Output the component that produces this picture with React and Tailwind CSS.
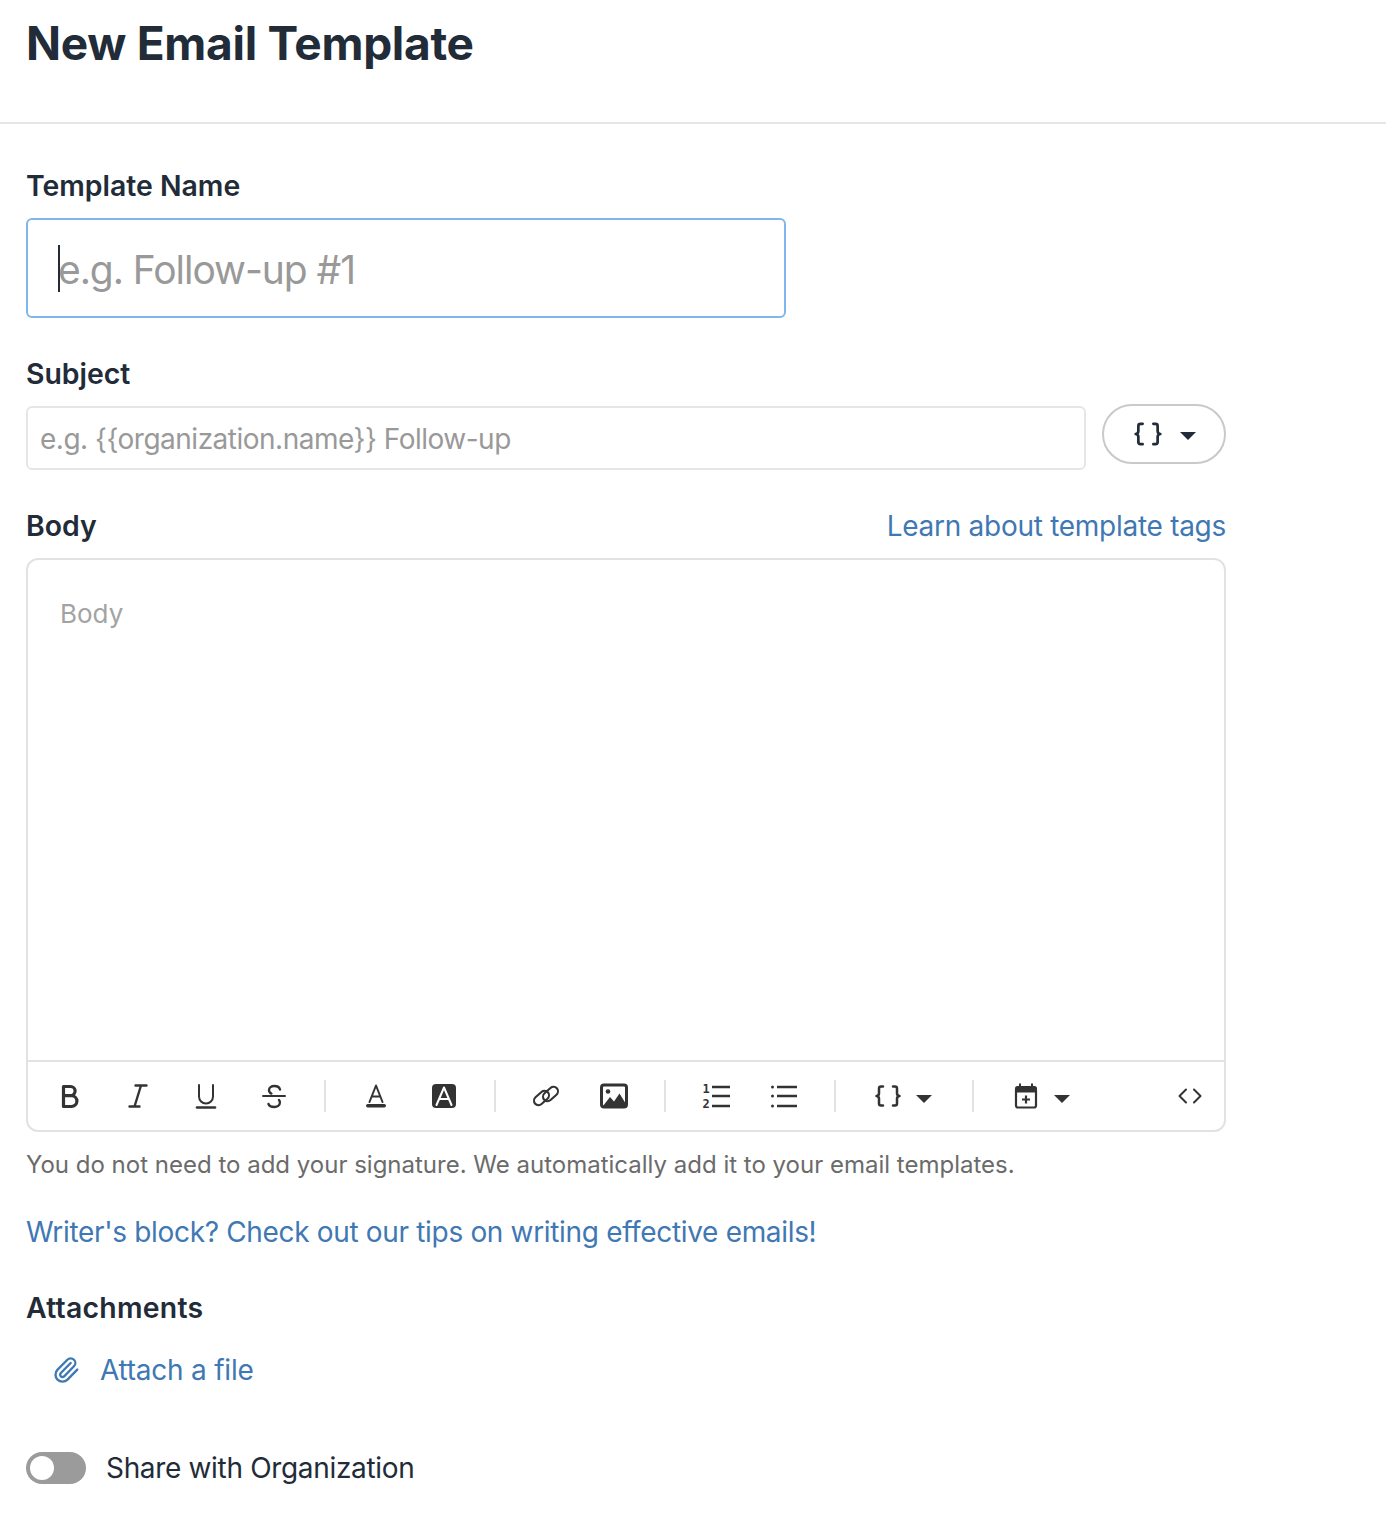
import { Paperclip } from 'lucide-react'

const INK = '#333333'

function Icon({ children, size = 28, className = '' }) {
  return (
    <svg width={size} height={size} viewBox="0 0 28 28" fill="none" stroke={INK} strokeWidth="2" strokeLinecap="round" strokeLinejoin="round" className={className}>
      {children}
    </svg>
  )
}

const BoldIcon = () => (
  <Icon>
    <path strokeWidth="3.200" d="M7.500 4.500h7a4.600 4.600 0 0 1 0 9.200h-7zM7.500 13.700h8a5.400 5.400 0 0 1 0 10.800h-8z" />
  </Icon>
)

const ItalicIcon = () => (
  <Icon>
    <path strokeWidth="2.400" d="M11.500 3.500h11M5.500 24.500h10M17 3.500l-6.500 21" />
  </Icon>
)

const UnderlineIcon = () => (
  <Icon>
    <path strokeWidth="2" d="M7 3v11.500a7 7 0 0 0 14 0V3" />
    <path strokeWidth="2.600" d="M5 25.500h18" />
  </Icon>
)

const StrikeIcon = () => (
  <Icon>
    <path strokeWidth="2" d="M3 14h22" />
    <path strokeWidth="2.400" d="M20 7.500c-.6-2.400-2.800-3.500-5.600-3.500-3.200 0-5.400 1.600-5.400 4 0 1.800 1 3 2.400 3.600M19 18c.6.8.9 1.700.9 2.600 0 2.800-2.500 4.400-5.700 4.400-2.800 0-5-1-5.700-3" />
  </Icon>
)

const TextColorIcon = () => (
  <Icon>
    <path strokeWidth="2" d="M7.500 20L14 3.500 20.500 20M10 14.500h8" />
    <rect x="4" y="22" width="20" height="3.500" rx="1.700" fill={INK} stroke="none" />
  </Icon>
)

const HighlightIcon = () => (
  <Icon>
    <rect x="2" y="2" width="24" height="24" rx="4" fill={INK} stroke="none" />
    <path stroke="#ffffff" strokeWidth="2" d="M6.500 23L14 5.500 21.500 23M9.500 17h9" />
  </Icon>
)

const LinkIcon = () => (
  <Icon>
    <g strokeWidth="2.100">
      <rect x="1" y="11.500" width="17" height="9" rx="4.500" transform="rotate(-42 9.500 16)" />
      <rect x="10" y="7.500" width="17" height="9" rx="4.500" transform="rotate(-42 18.500 12)" />
    </g>
  </Icon>
)

const ImageIcon = () => (
  <Icon>
    <rect x="1.500" y="3" width="25" height="22" rx="2.500" strokeWidth="3" fill="#ffffff" />
    <circle cx="8" cy="9.500" r="2.300" fill={INK} stroke="none" />
    <path fill={INK} stroke="none" d="M3 24l7-9 4 4.500 5.500-8L26 22v2.500H3z" />
  </Icon>
)

const OrderedIcon = () => (
  <Icon>
    <text x="0.500" y="11" fontFamily="'DejaVu Sans Mono', monospace" fontWeight="700" fontSize="12" fill={INK} stroke="none">1</text>
    <text x="0.500" y="26" fontFamily="'DejaVu Sans Mono', monospace" fontWeight="700" fontSize="12" fill={INK} stroke="none">2</text>
    <path strokeWidth="2.400" strokeLinecap="butt" d="M10 5h18M10 14h18M10 24h18" />
  </Icon>
)

const BulletIcon = () => (
  <Icon>
    <path strokeWidth="2.400" strokeLinecap="butt" d="M7 5h20M7 14h20M7 24h20" />
    <circle cx="2.500" cy="5" r="1.500" fill={INK} stroke="none" />
    <circle cx="2.500" cy="14" r="1.500" fill={INK} stroke="none" />
    <circle cx="2.500" cy="24" r="1.500" fill={INK} stroke="none" />
  </Icon>
)

const BracesIcon = ({ size = 28, color = INK }) => (
  <svg width={size} height={size} viewBox="0 0 28 28" fill="none" stroke={color} strokeWidth="2.500" strokeLinecap="round" strokeLinejoin="round">
    <path d="M9 4.500H7c-1.500 0-2 .8-2 2v5c0 1.300-.8 2.200-2.500 2.500 1.700.3 2.500 1.200 2.500 2.500v5c0 1.200.5 2 2 2h2" />
    <path d="M19 4.500h2c1.500 0 2 .8 2 2v5c0 1.300.8 2.200 2.500 2.500-1.700.3-2.500 1.200-2.500 2.500v5c0 1.200-.5 2-2 2h-2" />
  </svg>
)

const CalendarIcon = () => (
  <Icon>
    <path fill={INK} stroke="none" d="M7 1.500h2V4h10V1.500h2V4h1.500A2.500 2.500 0 0 1 25 6.500v4H3v-4A2.500 2.500 0 0 1 5.500 4H7z" />
    <rect x="4" y="6" width="20" height="19.500" rx="2" strokeWidth="2.200" />
    <path strokeWidth="2.200" strokeLinecap="butt" d="M14 13.500v8M10 17.500h8" />
  </Icon>
)

const CodeIcon = () => (
  <Icon>
    <path strokeWidth="2" d="M10 7.500L3.500 14l6.500 6.500M18 7.500l6.500 6.500-6.500 6.500" />
  </Icon>
)

function Caret({ color = INK }) {
  return (
    <svg width="16" height="10" viewBox="0 0 16 10" style={{ fill: color }}>
      <path d="M0 1h16L8 9z" />
    </svg>
  )
}

function ToolButton({ children }) {
  return <button className="flex h-full w-[68px] items-center justify-center">{children}</button>
}

function DropButton({ children }) {
  return (
    <button className="relative flex h-full w-[104px] items-center">
      <span className="ml-[22px] flex">{children}</span>
      <span className="absolute left-[64px] top-[32px] flex">
        <Caret />
      </span>
    </button>
  )
}

const Divider = () => <span className="mx-4 h-[32px] w-[2px] shrink-0 bg-[#e2e2e2]" />

function FieldLabel({ children, className = '' }) {
  return <label className={`block text-[28.4px] leading-[36px] font-semibold text-[#222b38] ${className}`}>{children}</label>
}

export default function App() {
  return (
    <div className="min-h-[1516px] bg-white font-['Inter',sans-serif] text-[#222b38]">
      <header className="h-[124px] border-b-2 border-[#e6e6e6] pl-[26px] pt-[14px]">
        <h1 className="text-[46px] leading-[58px] font-bold tracking-[-0.28px]">New Email Template</h1>
      </header>

      <main className="w-[1226px] pl-[26px] pt-[44px]">
        <FieldLabel>Template Name</FieldLabel>
        <div className="relative mt-[14px] w-[760px]">
          <input
            placeholder="e.g. Follow-up #1"
            className="block h-[100px] w-full rounded-md border-2 border-[#80b6ee] bg-white px-[30px] pt-[2px] text-[39px] tracking-[-1.05px] outline-none placeholder:text-[#999999]"
          />
          <span className="absolute left-[32px] top-[27px] h-[47px] w-[2px] bg-[#222b38]" />
        </div>

        <div className="mt-[38px]">
          <FieldLabel>Subject</FieldLabel>
        </div>
        <div className="mt-[12px] flex items-start gap-4">
          <input
            placeholder="e.g. {{organization.name}} Follow-up"
            className="mt-[2px] block h-[64px] w-[1060px] rounded-md border-2 border-[#e6e6e6] bg-white px-3 pt-[2px] text-[28px] tracking-[-0.5px] outline-none placeholder:text-[#999999]"
          />
          <button className="relative flex h-[60px] w-[124px] items-center rounded-full border-2 border-[#c9c9c9] bg-white">
            <span className="ml-[29px] flex">
              <BracesIcon size={30} color="#222b38" />
            </span>
            <span className="ml-[17px] mt-[4px] flex">
              <Caret color="#222b38" />
            </span>
          </button>
        </div>

        <div className="mt-[38px] flex items-center justify-between">
          <FieldLabel>Body</FieldLabel>
          <a className="text-[28px] leading-[36px] tracking-[-0.28px] text-[#3f78b3]">Learn about template tags</a>
        </div>

        <div className="mt-[14px] h-[574px] w-[1200px] overflow-hidden rounded-xl border-2 border-[#e2e2e2]">
          <div className="h-[500px] px-[32px] pt-[36px] text-[26px] leading-[36px] text-[#a3a3a3]">Body</div>
          <div className="flex h-[70px] items-center border-t-2 border-[#e2e2e2] pl-[8px]">
            <ToolButton><BoldIcon /></ToolButton>
            <ToolButton><ItalicIcon /></ToolButton>
            <ToolButton><UnderlineIcon /></ToolButton>
            <ToolButton><StrikeIcon /></ToolButton>
            <Divider />
            <ToolButton><TextColorIcon /></ToolButton>
            <ToolButton><HighlightIcon /></ToolButton>
            <Divider />
            <ToolButton><LinkIcon /></ToolButton>
            <ToolButton><ImageIcon /></ToolButton>
            <Divider />
            <ToolButton><OrderedIcon /></ToolButton>
            <ToolButton><BulletIcon /></ToolButton>
            <Divider />
            <DropButton><BracesIcon /></DropButton>
            <Divider />
            <DropButton><CalendarIcon /></DropButton>
            <div className="ml-auto">
              <ToolButton><CodeIcon /></ToolButton>
            </div>
          </div>
        </div>

        <p className="mt-[16px] text-[24px] leading-[34px] text-[#6b6b6b]">
          You do not need to add your signature. We automatically add it to your email templates.
        </p>

        <a className="mt-[32px] block text-[28px] leading-[36px] tracking-[-0.33px] text-[#3f78b3]">
          Writer's block? Check out our tips on writing effective emails!
        </a>

        <div className="mt-[40px]">
          <FieldLabel className="tracking-[0.25px]">Attachments</FieldLabel>
        </div>

        <a className="mt-[26px] flex items-center pl-[26px] text-[28px] leading-[36px] tracking-[-0.23px] text-[#3f78b3]">
          <Paperclip size={28} strokeWidth={2} className="mr-[20px]" />
          Attach a file
        </a>

        <div className="mt-[62px] flex items-center gap-5">
          <span className="flex h-[32px] w-[60px] items-center rounded-full bg-[#9b9b9b] pl-[4px]">
            <span className="h-[24px] w-[24px] rounded-full bg-white" />
          </span>
          <span className="text-[28px] leading-[36px] tracking-[-0.33px]">Share with Organization</span>
        </div>
      </main>
    </div>
  )
}
